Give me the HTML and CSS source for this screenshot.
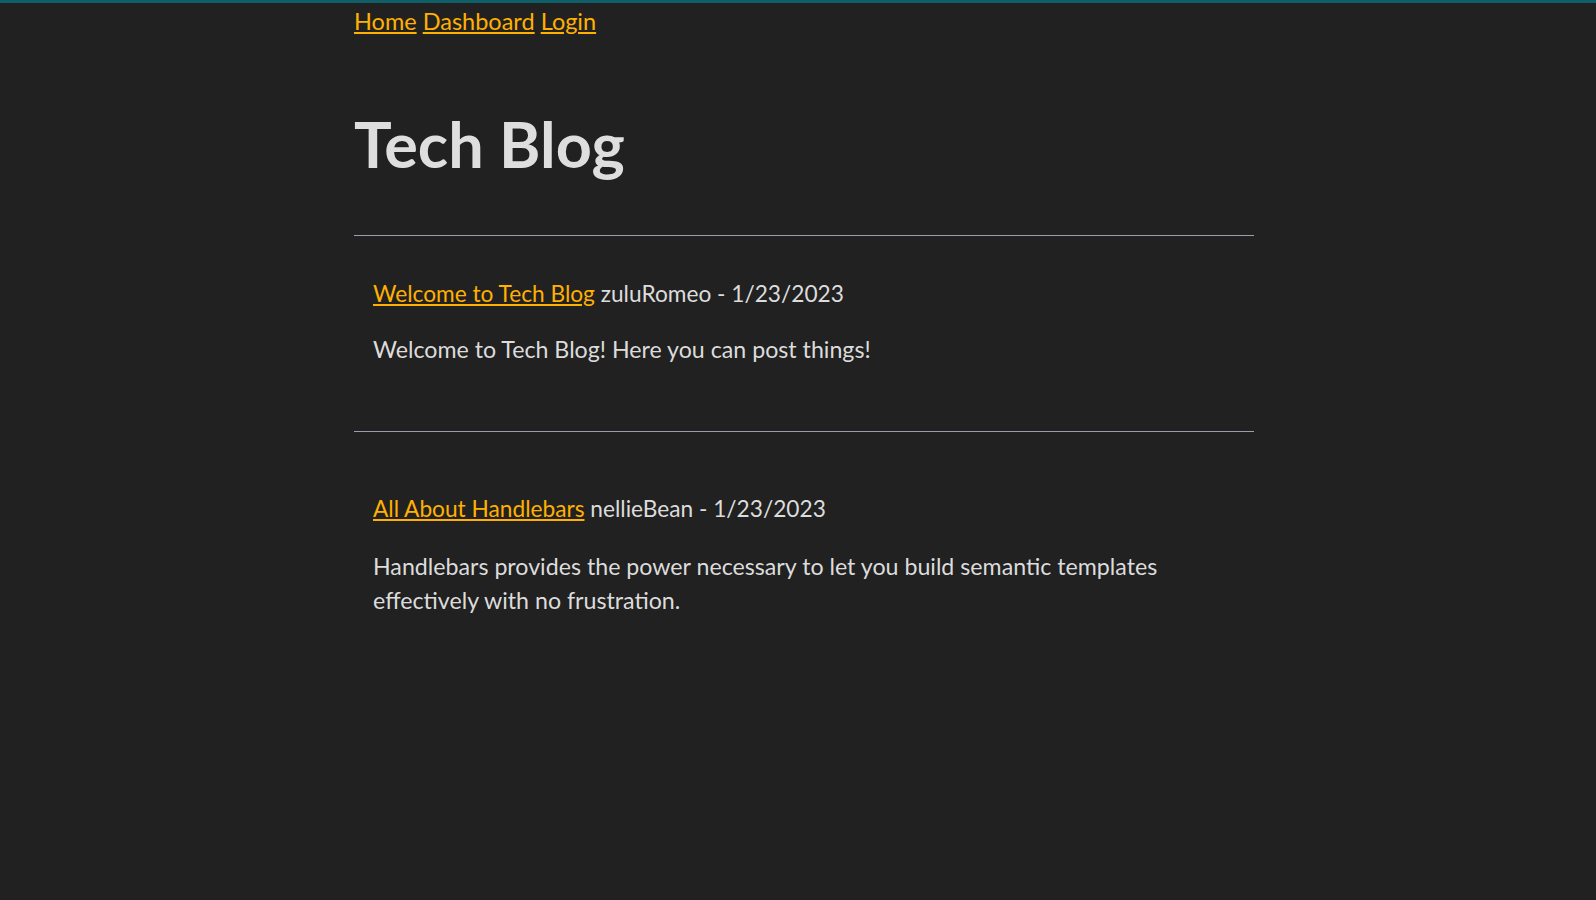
FILE: index.html
```html
<!DOCTYPE html>
<html lang="en">
<head>
<meta charset="utf-8">
<title>Tech Blog</title>
<link rel="stylesheet" href="styles.css">
</head>
<body>
<div class="container">
  <nav class="nav">
    <a href="#">Home</a>
    <a href="#">Dashboard</a>
    <a href="#">Login</a>
  </nav>
  <h1 class="title">Tech Blog</h1>
  <hr class="rule">
  <article class="post">
    <div class="post-head"><a href="#">Welcome to Tech Blog</a> zuluRomeo - 1/23/2023</div>
    <p class="post-body">Welcome to Tech Blog! Here you can post things!</p>
  </article>
  <hr class="rule">
  <article class="post post-second">
    <div class="post-head"><a href="#">All About Handlebars</a> nellieBean - 1/23/2023</div>
    <p class="post-body">Handlebars provides the power necessary to let you build semantic templates effectively with no frustration.</p>
  </article>
</div>
</body>
</html>
```
FILE: styles.css
```css
html, body {
  margin: 0;
  padding: 0;
}

body {
  background: #212121;
  color: #dcdcdc;
  font-family: "Lato", "Open Sans", sans-serif;
  border-top: 3px solid #0f5f68;
  min-height: 897px;
}

.container {
  width: 900px;
  margin: 0 auto;
  padding-left: 12px;
}

a {
  color: #ffb000;
  text-decoration: underline;
}

.nav {
  padding-top: 1px;
  font-size: 23.5px;
  line-height: 34px;
}

.title {
  margin: 69px 0 55px;
  font-size: 63px;
  line-height: 73px;
  font-weight: 700;
  color: #dedede;
}

.rule {
  margin: 0;
  border: 0;
  height: 1px;
  background: #9d9bb0;
}

.post {
  padding: 41px 20px 64px 19px;
}

.post-second {
  padding-top: 60px;
}

.post-head {
  font-size: 22.7px;
  line-height: 34px;
  margin-bottom: 21px;
}

.post-second .post-head {
  margin-bottom: 23px;
}

.post-body {
  margin: 0;
  font-size: 23.2px;
  line-height: 34.5px;
}
```
